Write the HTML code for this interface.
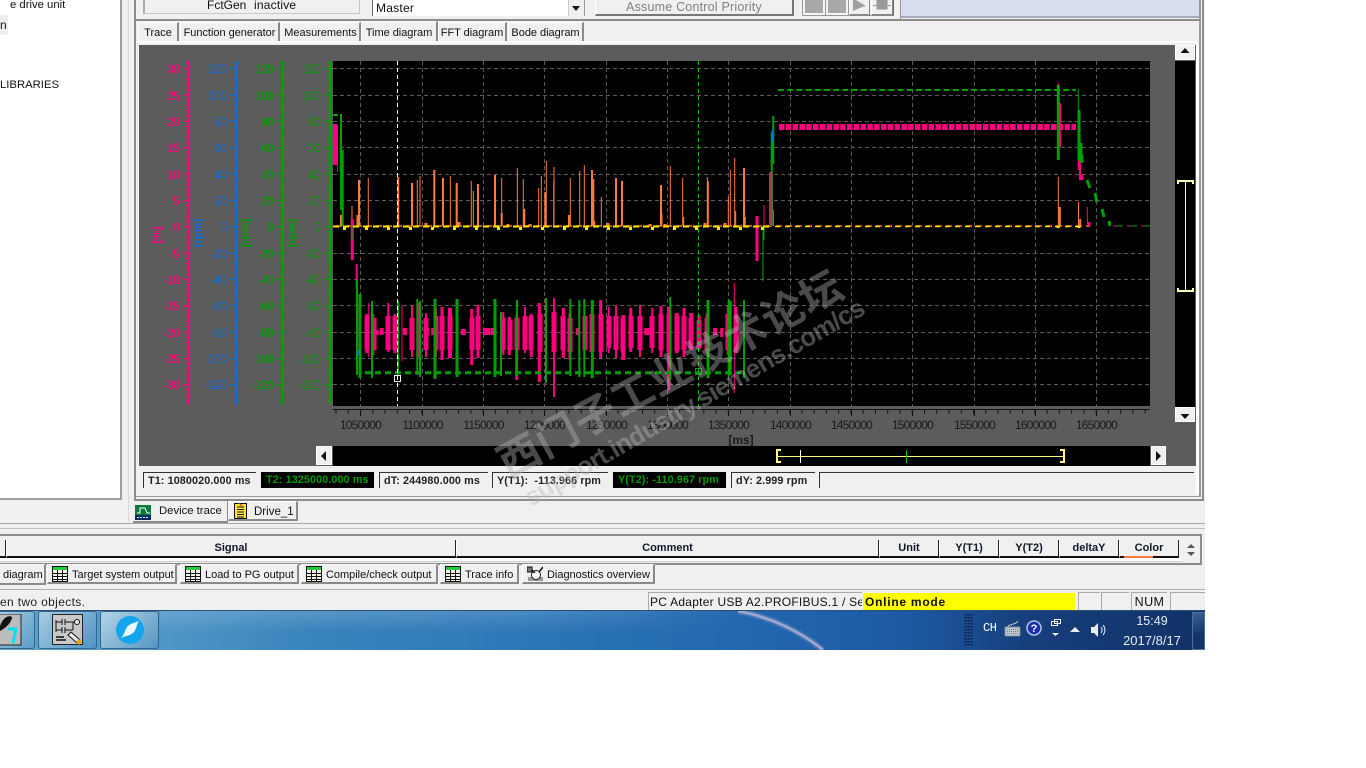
<!DOCTYPE html>
<html><head><meta charset="utf-8"><title>Device trace</title>
<style>
html,body{margin:0;padding:0;background:#fff;width:1366px;height:768px;overflow:hidden}
body{position:relative;font-family:"Liberation Sans","Noto Sans CJK SC",sans-serif;font-size:11px;color:#111}
.a{position:absolute;box-sizing:border-box;white-space:nowrap;overflow:hidden}
.tab{background:#f0f0f0;border:1px solid #fff;border-right:2px solid #8a8a8a;border-bottom:0;text-align:center;line-height:20px;font-size:11px;letter-spacing:-.03px}
.st{background:#f0f0f0;border-top:1px solid #333;border-left:1px solid #333;font-weight:bold;font-size:10.8px;line-height:16px;height:16px;top:472px;padding-left:4px;letter-spacing:.1px;color:#222}
.bk{background:#000;color:#009a00;border:0}
.th{top:540px;height:18px;background:#f0f0f0;border-left:1px solid #fff;border-right:1px solid #222;border-bottom:2px solid #111;text-align:center;font-weight:bold;font-size:11px;line-height:17px;color:#111827}
.t2{top:564px;height:20px;background:#f0f0f0;border:1px solid #fff;border-right:2px solid #8a8a8a;border-bottom:2px solid #8a8a8a;font-size:11px;line-height:20px;letter-spacing:-.02px}
.cell{top:592px;height:18px;background:#f0f0f0;border-top:1px solid #aaa;border-left:1px solid #aaa;font-size:12px;line-height:18px}
.bt{top:-3px;height:19px;background:#f0f0f0;border:1px solid #fff;border-right:1px solid #888;border-bottom:2px solid #888}
</style></head><body>
<svg width="0" height="0" style="position:absolute"><defs>
<symbol id="tb" viewBox="0 0 16 16"><rect x=".5" y=".5" width="15" height="15" fill="#f4f4e8" stroke="#111"/><rect x="1" y="1" width="14" height="3" fill="#1fd03a"/><path d="M1 7.5h14M1 10.5h14M1 13.5h14M5.500 4v11M10.500 4v11" stroke="#111" fill="none"/></symbol>
</defs></svg>

<!-- left tree -->
<div class="a" style="left:0;top:0;width:122px;height:500px;background:#fff;border-right:2px solid #a0a0a0;border-bottom:2px solid #a0a0a0"></div>
<div class="a" style="left:0;top:-3px;width:120px;height:16px;font-size:11.3px;line-height:16px;padding-left:10px">e drive unit</div>
<div class="a" style="left:0;top:15px;width:8px;height:20px;background:#eee;font-size:12px;line-height:20px">n</div>
<div class="a" style="left:0;top:77px;width:120px;height:16px;font-size:11.3px;line-height:16px">LIBRARIES</div>

<!-- app background -->
<div class="a" style="left:122px;top:0;width:1083px;height:610px;background:#f0f0f0"></div>
<div class="a" style="left:0;top:500px;width:1205px;height:110px;background:#f0f0f0"></div>
<div class="a" style="left:128px;top:0;width:1px;height:522px;background:#d8d8d8"></div>
<!-- main window frame -->
<div class="a" style="left:134px;top:-4px;width:1070px;height:505px;border:2px solid #8c8c8c;background:#f0f0f0"></div>
<div class="a" style="left:136px;top:496px;width:1064px;height:1px;background:#9a9a9a"></div>
<div class="a" style="left:1199px;top:0;width:2px;height:497px;background:#9a9a9a"></div>
<div class="a" style="left:1196px;top:42px;width:3px;height:452px;background:#fff"></div>

<!-- top strip -->
<div class="a" style="left:143px;top:-4px;width:217px;height:18px;background:#f0f0f0;border:1px solid #c8c8c8;border-left:2px solid #aaa"></div>
<div class="a" style="left:207px;top:-2px;width:42px;height:14px;line-height:14px;font-size:12px">FctGen</div>
<div class="a" style="left:254px;top:-2px;width:60px;height:14px;line-height:14px;font-size:12px;letter-spacing:.2px">inactive</div>
<div class="a" style="left:372px;top:-3px;width:213px;height:19px;background:#fff;border-left:1px solid #666;border-right:2px solid #999;line-height:22px;font-size:12px;padding-left:3px;letter-spacing:.25px">Master</div>
<div class="a" style="left:568px;top:-3px;width:16px;height:19px;background:#f0f0f0;border-left:1px solid #ccc"></div>
<div class="a" style="left:572px;top:6px;width:0;height:0;border:4px solid transparent;border-top:5px solid #111;border-bottom:0;overflow:visible"></div>
<div class="a" style="left:595px;top:-4px;width:199px;height:20px;background:#f0f0f0;border:1px solid #fff;border-right:2px solid #777;border-bottom:2px solid #777;text-align:center;color:#808080;font-size:12.5px;line-height:20px;letter-spacing:.2px">Assume Control Priority</div>
<div class="a" style="left:802px;top:-3px;width:92px;height:19px;background:#f0f0f0;border-right:1px solid #666;border-bottom:1px solid #888"></div>
<div class="a" style="left:803px;top:-3px;width:22px;height:18px;background:#a8a8a8;border:2px solid #f4f4f4;outline:1px solid #999"></div>
<div class="a" style="left:826px;top:-3px;width:22px;height:18px;background:#a8a8a8;border:2px solid #f4f4f4;outline:1px solid #999"></div>
<div class="a bt" style="left:849px;width:21px"></div>
<div class="a bt" style="left:871px;width:22px"></div>
<svg class="a" style="left:848px;top:0" width="46" height="15"><path d="M5 0h3l10 6-4 1-9 4z" fill="#a0a0a0"/><path d="M29 0h10v9H29z M25 5.500h4M39 5.500h4" fill="#999" stroke="#999"/></svg>
<div class="a" style="left:900px;top:0;width:1px;height:20px;background:#999"></div>
<div class="a" style="left:901px;top:0;width:298px;height:18px;background:#d6ddee;border-bottom:2px solid #a6abbb"></div>
<div class="a" style="left:136px;top:19px;width:1064px;height:2px;background:#8c8c8c"></div>

<!-- tabs -->
<div class="a tab" style="left:138px;top:22px;width:41px;height:19px">Trace</div>
<div class="a tab" style="left:180px;top:22px;width:100px;height:19px">Function generator</div>
<div class="a tab" style="left:281px;top:22px;width:80px;height:19px">Measurements</div>
<div class="a tab" style="left:361px;top:21px;width:77px;height:22px;line-height:23px;border-color:#fff #888 #f0f0f0 #fff">Time diagram</div>
<div class="a tab" style="left:438px;top:22px;width:69px;height:19px">FFT diagram</div>
<div class="a tab" style="left:508px;top:22px;width:76px;height:19px">Bode diagram</div>
<div class="a" style="left:136px;top:41px;width:1060px;height:2px;background:#fff"></div>

<!-- plot -->
<svg class="a" style="left:0;top:0;overflow:visible" width="1366" height="768" font-family="Liberation Sans,sans-serif">
<rect x="139" y="45" width="1057" height="421" fill="#5c5c5c"/>
<rect x="333" y="61" width="817" height="345" fill="#000"/>
<rect x="333" y="446" width="817" height="20" fill="#000"/>
<rect x="1175" y="61" width="20" height="346" fill="#000"/>
<!-- grid -->
<g stroke="#5a5a5a" stroke-width="1" stroke-dasharray="4 3" fill="none">
<path d="M333 68.500H1150M333 95.500H1150M333 121.500H1150M333 147.500H1150M333 174.500H1150M333 200.500H1150M333 253.500H1150M333 279.500H1150M333 305.500H1150M333 332.500H1150M333 358.500H1150M333 384.500H1150"/>
<path d="M360.500 61V406M422.500 61V406M483.500 61V406M544.500 61V406M606.500 61V406M667.500 61V406M728.500 61V406M790.500 61V406M851.500 61V406M912.500 61V406M974.500 61V406M1035.500 61V406M1096.500 61V406"/>
</g>
<!-- y axes -->
<g fill="none">
<g stroke="#ff0080"><path d="M189 61V405" stroke-width="2"/><path d="M187.500 62.800V405" stroke-width="3" stroke-dasharray="1 4.270"/><path d="M186 68.100V405" stroke-width="6" stroke-dasharray="1.200 25.150"/></g>
<g stroke="#0a6ee0"><path d="M236 61V405" stroke-width="2"/><path d="M234.500 62.800V405" stroke-width="3" stroke-dasharray="1 4.270"/><path d="M233 68.100V405" stroke-width="6" stroke-dasharray="1.200 25.150"/></g>
<g stroke="#00a000"><path d="M283 61V405" stroke-width="2"/><path d="M281.500 62.800V405" stroke-width="3" stroke-dasharray="1 4.270"/><path d="M280 68.100V405" stroke-width="6" stroke-dasharray="1.200 25.150"/></g>
<g stroke="#00a000"><path d="M330 61V405" stroke-width="2"/><path d="M328.500 62.800V405" stroke-width="3" stroke-dasharray="1 4.270"/><path d="M327 68.100V405" stroke-width="6" stroke-dasharray="1.200 25.150"/></g>
</g>
<g font-size="12" letter-spacing="-.8" text-anchor="end">
<g fill="#ff0080"><text x="179" y="73">30</text><text x="179" y="100">25</text><text x="179" y="126">20</text><text x="179" y="152">15</text><text x="179" y="179">10</text><text x="179" y="205">5</text><text x="179" y="231">0</text><text x="179" y="258">-5</text><text x="179" y="284">-10</text><text x="179" y="310">-15</text><text x="179" y="337">-20</text><text x="179" y="363">-25</text><text x="179" y="389">-30</text></g>
<g fill="#0a6ee0"><text x="226" y="73">120</text><text x="226" y="100">100</text><text x="226" y="126">80</text><text x="226" y="152">60</text><text x="226" y="179">40</text><text x="226" y="205">20</text><text x="226" y="231">0</text><text x="226" y="258">-20</text><text x="226" y="284">-40</text><text x="226" y="310">-60</text><text x="226" y="337">-80</text><text x="226" y="363">-100</text><text x="226" y="389">-120</text></g>
<g fill="#00a000"><text x="273" y="73">120</text><text x="273" y="100">100</text><text x="273" y="126">80</text><text x="273" y="152">60</text><text x="273" y="179">40</text><text x="273" y="205">20</text><text x="273" y="231">0</text><text x="273" y="258">-20</text><text x="273" y="284">-40</text><text x="273" y="310">-60</text><text x="273" y="337">-80</text><text x="273" y="363">-100</text><text x="273" y="389">-120</text></g>
<g fill="#00a000"><text x="320" y="73">120</text><text x="320" y="100">100</text><text x="320" y="126">80</text><text x="320" y="152">60</text><text x="320" y="179">40</text><text x="320" y="205">20</text><text x="320" y="231">0</text><text x="320" y="258">-20</text><text x="320" y="284">-40</text><text x="320" y="310">-60</text><text x="320" y="337">-80</text><text x="320" y="363">-100</text><text x="320" y="389">-120</text></g>
</g>
<g font-size="11" font-weight="bold" text-anchor="middle">
<text transform="translate(160.500 235) rotate(-90)" fill="#ff0080">[%]</text>
<text transform="translate(201.500 233) rotate(-90)" fill="#0a6ee0">[rpm]</text>
<text transform="translate(248.500 233) rotate(-90)" fill="#00a000">[rpm]</text>
<text transform="translate(295.500 233) rotate(-90)" fill="#00a000">[rpm]</text>
</g>
<!-- x axis -->
<path d="M333 409.500H1150" stroke="#111" fill="none"/>
<path d="M335.500 411.500H1150" stroke="#111" stroke-width="4" stroke-dasharray="1 11.260" fill="none"/>
<path d="M360.500 409V416M422.500 409V416M483.500 409V416M544.500 409V416M606.500 409V416M667.500 409V416M728.500 409V416M790.500 409V416M851.500 409V416M912.500 409V416M974.500 409V416M1035.500 409V416M1096.500 409V416" stroke="#111" fill="none"/>
<g font-size="12" letter-spacing="-.8" fill="#1a1a1a" text-anchor="middle">
<text x="360.500" y="429">1050000</text><text x="422.500" y="429">1100000</text><text x="483.500" y="429">1150000</text><text x="544.500" y="429">1200000</text><text x="606.500" y="429">1250000</text><text x="667.500" y="429">1300000</text><text x="728.500" y="429">1350000</text><text x="790.500" y="429">1400000</text><text x="851.500" y="429">1450000</text><text x="912.500" y="429">1500000</text><text x="974.500" y="429">1550000</text><text x="1035.500" y="429">1600000</text><text x="1096.500" y="429">1650000</text>
<text x="741" y="444" font-weight="bold" letter-spacing="0">[ms]</text></g>

<!-- orange spikes -->
<g fill="none" stroke="#ff7a3a">
<path stroke-width="1" d="M417.300 180V226M420 176V226M450.300 176V226M471.300 181V226M473.300 191V226M501.700 178V226M517.300 168V226M523.300 179V226M538.700 188V226M541.300 176V226M546.300 161V226M554 167V226M553.700 181V226M570.300 178V226M579.700 171V226M584.300 165V226M601.300 197V226M662 214V226M670.300 166V226M682.700 178V226M683.700 217V226M707.300 177V226M708.300 181V226M728.300 197V226M730.300 170V226M734.700 158V226M735.700 211V226M745.300 217V226M368.300 178V226M1058.300 177V226M1078.500 202V226M352 206V226"/>
<path stroke-width="2" d="M412 183V226M434.300 170V226M443 178V226M456.700 183V226M478 184V226M495 175V226M501.700 213V226M524.300 209V226M545.300 192V226M569 215V226M592 170V226M593.300 179V226M594.300 221V226M616 178V226M622 181V226M661 185V226M744 168V226M398.300 177V226M359 180V226M341 215V226M357.500 215V226M1059.800 207V226M1080.200 219V226M772.700 210V226"/>
<path stroke-width="3" d="M342 222V226M426 223V226M459 222V226M508 224V226M530 224V226M608 223V226M650 224V226M665 224V226M705 223V226M725 223V226"/>
<path stroke-width="1.500" d="M336 226H1090" stroke-dasharray="6 4"/>
</g>
<!-- pink block -->
<g fill="none" stroke="#ff0080">
<path stroke-width="5" d="M367 316V350M374 318V350M388 316V350M395 316V350M412 318V350M426 318V350M436 316V350M442 316V350M450 316V350M472 318V350M478 316V350M503 318V350M510 320V350M517 318V350M525 316V350M531 316V350M540 314V352M554 312V352M563 316V350M570 318V352M585 316V350M592 314V352M601 314V352M609 316V348M616 316V350M623 318V352M631 316V348M640 316V350M652 316V348M661 314V350M669 314V352M677 316V350M684 316V350M691 318V348M699 320V348M707 318V350M728 314V350M736 316V350"/>
<path stroke-width="1" d="M368.700 303V357M402 305V361M418.700 303V357M420.700 301V360M545.700 300V385M585 303V358M734.300 283V393M337.500 125V172M764 205V226M773.300 130V164M1087.300 207V224M1058.300 83V90"/>
<path stroke-width="2" d="M359.300 303V353M373.300 314V355M388.300 303V352M412 306V357M426 313V357M436 308V357M503.300 312V355M525 307V353M554 298V397M592.300 300V378M608.700 307V353M616 305V358M640 305V357M652.300 308V353M706.700 313V353M1060 103V147M1080 160V180M340.700 135V172M356.700 264V290"/>
<path stroke-width="3" d="M366.700 314V353M395 314V353M442 307V360M478 305V358M471.700 309V365M509.300 317V355M516.700 315V380M531.300 314V357M539.300 303V382M563.300 308V358M570 313V360M600.700 300V358M630.700 308V352M661 306V357M668.700 307V390M684 308V357M699 315V350M728.300 305V355M736 307V353M427.700 328V335M432.700 328V335M492.300 328V335M577.300 328V335M610 328V335M721.700 328V337M352.300 219V260M757 216V261M1079.300 144V170"/>
<path stroke-width="4" d="M376.700 330V335M381.700 328V335M405 328V335M450 308V358M623.300 315V360M676.700 313V353M691.300 313V350M715 328V335M771 172V226M335 124V165"/>
<path stroke-width="5" d="M463.300 329V335M646.700 328V335"/><path stroke-width="7" d="M486.700 328V335"/>
<path stroke-width="3" d="M1082 175V180M1089 222V226"/>
<path stroke-width="6" stroke-dasharray="5.500 1.300" d="M779 127H1076"/>
<path stroke-width="1" stroke-dasharray="6 8" d="M1113 226H1150"/>
</g>
<!-- green -->
<g fill="none" stroke="#00a000">
<path stroke-width="1" d="M763 226V281M1078.300 89V143M352 225V240M764 226V240"/>
<path stroke-width="2" d="M341 114V210M342.700 150V226M357 280V375M372 301V378M398 301V376M417.300 299V375M420 301V377M546 298V383M570.300 299V376M579.300 300V377M584.300 299V377M670.300 297V380M728.700 299V377M730.700 301V375M744 300V378M501 312V376M517 300V376M771.700 132V226M773.300 116V164"/>
<path stroke-width="3" d="M360 294V378M435 299V379M457 299V377M495 299V377M592.300 300V378M708 300V378M1058.300 85V160M1079 110V160M1081 143V162M1082 155V163"/>
<path stroke-width="3" d="M1087 180L1090 188M1095 193L1097 202M1102 209L1104 217M1109 221L1110 226"/>
<path stroke-width="2" stroke-dasharray="6 3.200" d="M778 90H1076M333 115H338"/>
<path stroke-width="3" stroke-dasharray="6 4" d="M365 372.700H745"/>
<path stroke-width="1" stroke-dasharray="7 7" d="M1116 226H1150"/>
</g>
<path d="M772.700 130V142M358 350V355" stroke="#0a6ee0" stroke-width="2" fill="none"/>
<!-- yellow -->
<g fill="none" stroke="#ffe800">
<path stroke-width="2" stroke-dasharray="6 4" d="M333 226.500H770"/>
<path stroke-width="3" stroke-dasharray="3 19" d="M343 228.500H770"/>
<path stroke-width="1.500" stroke-dasharray="5 5" d="M775 226.500H1085"/>
<path stroke-width="3" d="M1058 226V228M1079 226V228"/>
</g>
<!-- cursors -->
<path d="M397.500 61V406" stroke="#fff" stroke-dasharray="4 3" fill="none"/>
<path d="M698.500 61V406" stroke="#00c000" stroke-dasharray="4 3" fill="none"/>
<rect x="394.500" y="375.500" width="6" height="6" fill="none" stroke="#eee"/>
<rect x="695.500" y="368.500" width="6" height="6" fill="none" stroke="#00a000"/>
<!-- scroll -->
<path d="M778 456.500H1063" stroke="#ffff80" fill="none"/>
<path d="M781 450H777V462H781M1060 450H1064V462H1060" stroke="#ffff80" stroke-width="2" fill="none"/>
<path d="M800.500 450V463" stroke="#fff" fill="none"/><path d="M906.500 450V463" stroke="#00c000" fill="none"/>
<path d="M1178 184V181H1193V184M1178 288V291H1193V288" stroke="#ffffc0" stroke-width="2" fill="none"/>
<path d="M1185.500 181V291" stroke="#ffff90" fill="none"/>
<!-- scroll buttons -->
<g fill="#f0f0f0" stroke="#fff"><rect x="316.500" y="446.500" width="15" height="18"/><rect x="1151.500" y="446.500" width="14" height="18"/><rect x="1175.500" y="45.500" width="19" height="14"/><rect x="1175.500" y="407.500" width="19" height="14"/></g>
<path d="M321 456l5-5v10zM1161 456l-5-5v10zM1185 48l-4.500 5h9zM1185 419l-4.500-5h9z" fill="#111"/>
</svg>

<!-- cursor status -->
<div class="a" style="left:139px;top:466px;width:1056px;height:26px;background:#f0f0f0"></div>
<div class="a st" style="left:143px;width:113px">T1: 1080020.000 ms</div>
<div class="a st bk" style="left:261px;width:113px;padding-left:5px">T2: 1325000.000 ms</div>
<div class="a st" style="left:379px;width:109px">dT: 244980.000 ms</div>
<div class="a st" style="left:492px;width:116px">Y(T1):&nbsp; -113.966 rpm</div>
<div class="a st bk" style="left:613px;width:113px;padding-left:5px">Y(T2): -110.967 rpm</div>
<div class="a st" style="left:731px;width:84px">dY: 2.999 rpm</div>
<div class="a st" style="left:819px;width:375px"></div>

<!-- doc tabs -->
<div class="a" style="left:133px;top:501px;width:95px;height:22px;background:#f0f0f0;border-bottom:2px solid #8a8a8a;border-right:1px solid #888;line-height:20px;padding-left:26px;font-size:11.3px">Device trace</div>
<svg class="a" style="left:135px;top:505px" width="16" height="15"><rect width="16" height="15" fill="#0a2a66"/><rect y="0" width="16" height="10" fill="#0a7a3a"/><path d="M2 8h3v-5h5l2 5h3" stroke="#fff" fill="none"/><path d="M2 12.500h12" stroke="#cfe" stroke-dasharray="2 1"/></svg>
<div class="a" style="left:228px;top:501px;width:70px;height:20px;background:#f0f0f0;border:1px solid #fff;border-right:2px solid #8a8a8a;border-bottom:2px solid #8a8a8a;line-height:20px;padding-left:25px;font-size:11.500px">Drive_1</div>
<svg class="a" style="left:234px;top:503px" width="14" height="16"><rect x=".5" y=".5" width="12" height="15" fill="#ffe63a" stroke="#111"/><path d="M3 4h7M3 6.500h7M3 9h7M3 11.500h7M3 14h7" stroke="#111"/><path d="M5 0l3 3" stroke="#e02020"/></svg>

<div class="a" style="left:0;top:523px;width:1205px;height:1px;background:#a8a8a8"></div>
<div class="a" style="left:0;top:528px;width:1205px;height:1px;background:#c4c4c4"></div>
<div class="a" style="left:0;top:534px;width:1202px;height:31px;border-top:2px solid #8c8c8c;border-right:2px solid #8c8c8c;border-bottom:2px solid #8c8c8c"></div>

<!-- table header -->
<div class="a th" style="left:-2px;width:8px"></div>
<div class="a th" style="left:6px;width:450px">Signal</div>
<div class="a th" style="left:456px;width:423px">Comment</div>
<div class="a th" style="left:879px;width:60px">Unit</div>
<div class="a th" style="left:939px;width:60px">Y(T1)</div>
<div class="a th" style="left:999px;width:60px">Y(T2)</div>
<div class="a th" style="left:1059px;width:60px">deltaY</div>
<div class="a th" style="left:1119px;width:60px;overflow:visible">Color</div>
<div class="a" style="left:1124px;top:556px;width:29px;height:2px;background:#ff7a3a"></div>
<div class="a" style="left:0;top:558px;width:1182px;height:4px;background:#fff;border-bottom:1px solid #ccc"></div>
<svg class="a" style="left:1182px;top:540px" width="18" height="20"><path d="M5 8l4-4 4 4zM5 12l4 4 4-4z" fill="#555"/></svg>

<!-- output tabs -->
<div class="a t2" style="left:-2px;width:48px;padding-left:4px;height:21px">diagram</div>
<div class="a t2" style="left:47px;width:130px;padding-left:24px">Target system output</div>
<div class="a t2" style="left:180px;width:119px;padding-left:24px">Load to PG output</div>
<div class="a t2" style="left:301px;width:137px;padding-left:24px">Compile/check output</div>
<div class="a t2" style="left:440px;width:79px;padding-left:24px">Trace info</div>
<div class="a t2" style="left:522px;width:133px;padding-left:24px">Diagnostics overview</div>
<svg class="a" style="left:52px;top:566px" width="16" height="16"><use href="#tb"/></svg>
<svg class="a" style="left:185px;top:566px" width="16" height="16"><use href="#tb"/></svg>
<svg class="a" style="left:306px;top:566px" width="16" height="16"><use href="#tb"/></svg>
<svg class="a" style="left:445px;top:566px" width="16" height="16"><use href="#tb"/></svg>
<svg class="a" style="left:527px;top:566px" width="16" height="16"><rect x="0" y="1" width="5" height="5" fill="#777" stroke="#111"/><rect x="1" y="11" width="15" height="4" fill="#999"/><circle cx="9" cy="9" r="4.500" fill="#fff" stroke="#111"/><path d="M5 4l3 3M16 1l-4 5" stroke="#111" stroke-width="1.500"/></svg>

<!-- status bar -->
<div class="a" style="left:0;top:589px;width:1205px;height:1px;background:#b0b0b0"></div>
<div class="a" style="left:0;top:594px;width:200px;height:16px;font-size:12px;line-height:16px;letter-spacing:.35px;color:#222">en two objects.</div>
<div class="a cell" style="left:648px;width:214px;padding-left:1px;letter-spacing:.25px">PC Adapter USB A2.PROFIBUS.1 / Se</div>
<div class="a cell" style="left:863px;width:212px;background:#ff0;border:0;padding-left:2px;font-weight:bold;letter-spacing:.75px;top:593px;height:17px;line-height:18px">Online mode</div>
<div class="a cell" style="left:1078px;width:22px"></div>
<div class="a cell" style="left:1101px;width:28px"></div>
<div class="a cell" style="left:1131px;width:36px;text-align:center;font-size:12.5px;letter-spacing:.4px">NUM</div>
<div class="a cell" style="left:1170px;width:35px"></div>

<!-- taskbar -->
<div class="a" style="left:0;top:610px;width:1205px;height:40px;background:linear-gradient(90deg,#5fa2cc 0,#4e96c6 14%,#3a85bd 25%,#2b76b6 45%,#2267b0 62%,#1d5aa5 75%,#163f7c 85%,#123267 100%);border-top:1px solid #2a4f78"></div>
<div class="a" style="left:160px;top:611px;width:600px;height:22px;background:linear-gradient(180deg,rgba(255,255,255,.15),rgba(255,255,255,0));-webkit-mask-image:linear-gradient(90deg,#000 60%,transparent);mask-image:linear-gradient(90deg,#000 60%,transparent)"></div>
<svg class="a" style="left:720px;top:611px" width="120" height="39"><path d="M18 0C50 6 80 20 103 39" stroke="#b0a8cc" stroke-width="6" fill="none" opacity=".3"/><path d="M18 0C50 6 80 20 103 39" stroke="#d8c8dc" stroke-width="2.500" fill="none" opacity=".6"/></svg>
<div class="a" style="left:-4px;top:611px;width:39px;height:38px;background:linear-gradient(135deg,#a6cde2,#5a9cc8);border:1px solid #33668f;border-radius:3px"></div>
<div class="a" style="left:38px;top:611px;width:59px;height:38px;background:linear-gradient(135deg,#a6cde2,#4f93c2);border:1px solid #33668f;border-radius:3px"></div>
<div class="a" style="left:100px;top:611px;width:59px;height:38px;background:linear-gradient(135deg,#b4d4e6,#5596c2);border:1px solid #33668f;border-radius:3px"></div>
<svg class="a" style="left:0;top:614px" width="22" height="32"><rect x="-3" y="0" width="24" height="31" fill="#bcbcbc" stroke="#222"/><path d="M0 12C3 3 9 1 12 3 12 8 6 14 0 17z" fill="#111"/><path d="M8 15h8l-3 14" stroke="#00e0f0" stroke-width="3" fill="none"/></svg>
<svg class="a" style="left:52px;top:614px" width="32" height="32"><rect x=".5" y=".5" width="30" height="30" fill="#c8c8c8" stroke="#222"/><path d="M4 6v12M4 8h6M10 5v6M13 5v6M13 8h10M4 16h6M10 13v6M13 13v6M13 16h8M21 8v8" stroke="#111" fill="none"/><circle cx="25" cy="8" r="2.500" fill="#eee" stroke="#111"/><path d="M4 23h8M4 26h10" stroke="#111" stroke-width="1.500"/><path d="M19 18l9 8-3 3-9-8z" fill="#eee" stroke="#111"/><circle cx="27" cy="28" r="2.500" fill="#e8a020"/></svg>
<svg class="a" style="left:116px;top:616px" width="28" height="28"><circle cx="14" cy="14" r="14" fill="#14a5ee"/><path d="M5 22C9 18 9 12 13 9 17 7 20 6 23 5 20 9 21 13 17 17 13 20 9 20 5 22z" fill="#eef8ff"/></svg>
<!-- tray -->
<svg class="a" style="left:964px;top:614px" width="12" height="32"><path d="M1.500 0V32M4.500 0V32M7.500 0V32" stroke="#08224a" stroke-width="2" stroke-dasharray="1.500 1.500" fill="none"/></svg>
<div class="a" style="left:983px;top:621px;width:16px;height:15px;color:#fff;font:12px/15px 'Liberation Mono',monospace;letter-spacing:-.4px">CH</div>
<svg class="a" style="left:1004px;top:620px" width="17" height="17"><rect x="1" y="7" width="15" height="9" rx="1" fill="#c4cbd0" stroke="#7a8a98"/><path d="M3 9.500h11M3 11.500h11M3 13.500h11" stroke="#6c7880" stroke-dasharray="1 1"/><path d="M4 7C4 4 12 5 14 1" stroke="#c4cbd0" fill="none"/></svg>
<svg class="a" style="left:1026px;top:620px" width="16" height="16"><circle cx="8" cy="8" r="7" fill="#1a2fb0" stroke="#b0c4e0" stroke-width="1.500"/><text x="8" y="12" font-size="11" font-weight="bold" fill="#fff" text-anchor="middle" font-family="Liberation Sans">?</text></svg>
<svg class="a" style="left:1050px;top:618px" width="12" height="22"><path d="M4.500 1.500h6v4h-6zM1.500 3.500h6v4h-6z" stroke="#fff" fill="#123267"/><path d="M2 15h7l-3.500 3z" fill="#fff"/></svg>
<svg class="a" style="left:1069px;top:626px" width="12" height="8"><path d="M6 1l5 5H1z" fill="#e8eef5"/></svg>
<svg class="a" style="left:1090px;top:622px" width="16" height="16"><path d="M1 5h3l4-4v14l-4-4H1z" fill="#e8eef5"/><path d="M11 5c1.500 2 1.500 4 0 6M13 3c2.500 3 2.500 7 0 10" stroke="#e8eef5" fill="none"/></svg>
<div class="a" style="left:1120px;top:614px;width:64px;height:15px;text-align:center;color:#e8eef5;font-size:12.5px;line-height:15px">15:49</div>
<div class="a" style="left:1118px;top:633px;width:68px;height:15px;text-align:center;color:#e8eef5;font-size:13px;line-height:15px">2017/8/17</div>
<div class="a" style="left:1192px;top:612px;width:13px;height:38px;background:linear-gradient(160deg,#3a648f,#133468 60%);border:1px solid #4a6f98"></div>

<!-- watermark -->
<svg class="a" style="left:0;top:0;pointer-events:none" width="1366" height="768" font-family="Liberation Sans,Noto Sans CJK SC,sans-serif">
<text transform="translate(508 479) rotate(-28.500)" font-size="42" font-weight="bold" fill="#b0b0b0" fill-opacity=".42" textLength="385" font-family="Noto Sans CJK SC,sans-serif">西门子工业技术论坛</text>
<text transform="translate(531 507) rotate(-30)" font-size="26" font-weight="bold" fill="#b8b8b8" fill-opacity=".4" textLength="388">support.industry.siemens.com/cs</text>
</svg>
</body></html>
